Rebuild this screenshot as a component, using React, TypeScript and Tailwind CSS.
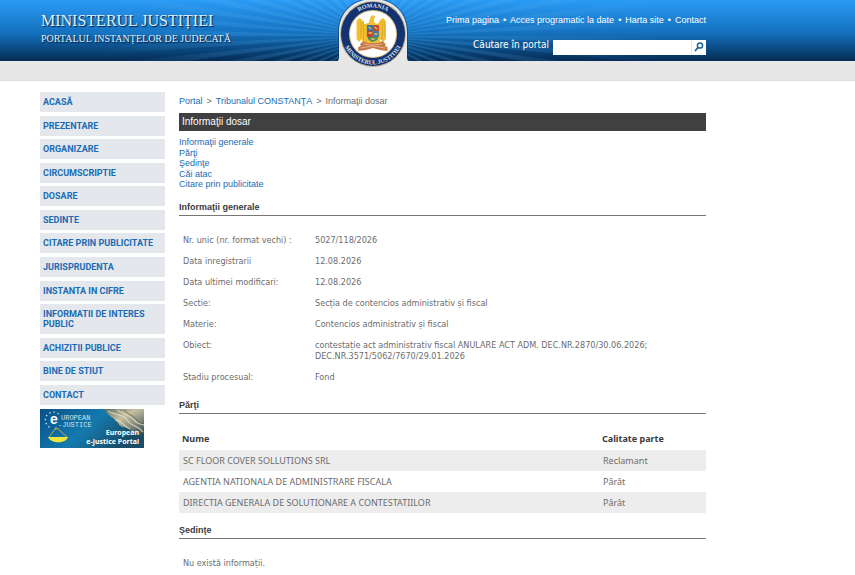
const menu = [
  "ACASĂ",
  "PREZENTARE",
  "ORGANIZARE",
  "CIRCUMSCRIPTIE",
  "DOSARE",
  "SEDINTE",
  "CITARE PRIN PUBLICITATE",
  "JURISPRUDENTA",
  "INSTANTA IN CIFRE",
  "INFORMATII DE INTERES PUBLIC",
  "ACHIZITII PUBLICE",
  "BINE DE STIUT",
  "CONTACT",
]

const topLinks = ["Prima pagina", "Acces programatic la date", "Harta site", "Contact"]

const sections = ["Informaţii generale", "Părţi", "Şedinţe", "Căi atac", "Citare prin publicitate"]

const details = [
  { label: "Nr. unic (nr. format vechi) :", value: "5027/118/2026" },
  { label: "Data inregistrarii", value: "12.08.2026" },
  { label: "Data ultimei modificari:", value: "12.08.2026" },
  { label: "Sectie:", value: "Secția de contencios administrativ și fiscal" },
  { label: "Materie:", value: "Contencios administrativ și fiscal" },
  { label: "Obiect:", value: "contestație act administrativ fiscal ANULARE ACT ADM. DEC.NR.2870/30.06.2026; DEC.NR.3571/5062/7670/29.01.2026" },
  { label: "Stadiu procesual:", value: "Fond" },
]

const parties = [
  { name: "SC FLOOR COVER SOLLUTIONS SRL", role: "Reclamant" },
  { name: "AGENTIA NATIONALA DE ADMINISTRARE FISCALA", role: "Pârât" },
  { name: "DIRECTIA GENERALA DE SOLUTIONARE A CONTESTATIILOR", role: "Pârât" },
]

// thin wedges that fan out from behind the emblem
const rays = Array.from({ length: 48 }, (_, i) => {
  const a = (i * 7.5 * Math.PI) / 180
  const b = ((i * 7.5 + 3.4) * Math.PI) / 180
  const point = (t: number) => `${(373 + 520 * Math.cos(t)).toFixed(1)},${(36 + 260 * Math.sin(t)).toFixed(1)}`
  return `373,36 ${point(a)} ${point(b)}`
})

const Rays = () => (
  <svg className="absolute inset-0 h-full w-full" viewBox="0 0 855 61" preserveAspectRatio="xMinYMin slice" aria-hidden="true">
    <defs>
      <radialGradient id="rayFade" gradientUnits="userSpaceOnUse" cx="373" cy="36" r="290">
        <stop offset="0" stopColor="#5fc0ff" stopOpacity="0.2" />
        <stop offset="0.5" stopColor="#5fc0ff" stopOpacity="0.14" />
        <stop offset="1" stopColor="#5fc0ff" stopOpacity="0" />
      </radialGradient>
    </defs>
    {rays.map((points) => <polygon key={points} points={points} fill="url(#rayFade)" />)}
  </svg>
)

const Emblem = () => (
  <svg className="relative block h-[70px] w-[80px]" viewBox="0 0 80 70" role="img" aria-label="România - Ministerul Justiției">
    <defs>
      <path id="arcTop" d="M13.500 33a26.500 26.500 0 0 1 53 0" />
      <path id="arcBottom" d="M9.500 33a30.500 30.500 0 0 0 61 0" />
    </defs>
    <path d="M3 61c2-1 2-3 2-6V32C5 12 20-2 40-2s35 14 35 34v23c0 3 0 5 2 6z" fill="#06305c" opacity="0.5" />
    <path d="M4 61.500c2-1 2-3 2-6V32C6 12 21-1 40-1s34 13 34 33v23.500c0 3 0 5 2 6z" fill="#e7e7e7" />
    <circle cx="40" cy="34" r="33" fill="#b9b391" />
    <circle cx="40" cy="34" r="32" fill="#14326f" />
    <circle cx="40" cy="34" r="24" fill="#d9c98c" />
    <circle cx="40" cy="34" r="23" fill="#fff" />
    <g transform="translate(0 1)" fill="#dfe6f2" fontSize="6" fontWeight="bold" fontFamily="Liberation Serif, serif" textAnchor="middle">
      <text>
        <textPath href="#arcTop" startOffset="50%">ROMANIA</textPath>
      </text>
      <text>
        <textPath href="#arcBottom" startOffset="50%">MINISTERUL JUSTITIEI</textPath>
      </text>
    </g>
    <g transform="translate(5.500 0) scale(0.860 1)">
      <path d="M38 16l2-1 3 2-2 2 1 4 4 1c1-3 3-5 6-6l3 3v18l-3 3-3-3-2 5h-18l-2-5-3 3-3-3V21l3-3c3 1 5 3 6 6l5-1 1-3z" fill="#f1be2c" />
      <path d="M29 21v19M26 22v16M51 21v19M54 22v15" stroke="#dda326" strokeWidth="0.800" />
      <path d="M33 25h7v6h-7z" fill="#3474b4" />
      <path d="M40 25h7v6h-7z" fill="#c34838" />
      <path d="M33 31h7v6h-7z" fill="#bd4535" />
      <path d="M40 31h7v6h-7z" fill="#497fa3" />
      <path d="M34 37h12c0 3-3 4-6 5-3-1-6-2-6-5z" fill="#488b61" />
      <path d="M35 27l3 2M42 27l3 2M35 33h4M42 34h3M38 39h4" stroke="#f0c64b" strokeWidth="1.300" />
      <path d="M29 41l-4 3 1 2-3 1v4l9-1 8-2 8 2 9 1v-4l-3-1 1-2-4-3-5 2H34z" fill="#c87a4c" />
      <path d="M29 44l10 1 12-1M26 48l14-2 14 2" stroke="#edc4a0" strokeWidth="0.800" fill="none" />
    </g>
  </svg>
)

const JusticeBanner = () => (
  <a href="#e-justice" className="mt-1 block w-[104px]" aria-label="European e-Justice Portal">
    <svg className="block h-[39px] w-full" viewBox="0 0 104 39">
      <defs>
        <linearGradient id="bannerBlue" x1="0" y1="0" x2="1" y2="0.4">
          <stop offset="0" stopColor="#075087" />
          <stop offset="0.55" stopColor="#147aae" />
          <stop offset="1" stopColor="#194c66" />
        </linearGradient>
        <linearGradient id="bannerStone" x1="0" y1="0" x2="0.8" y2="1">
          <stop offset="0" stopColor="#526c67" />
          <stop offset="0.4" stopColor="#c9c0a1" />
          <stop offset="1" stopColor="#304e58" />
        </linearGradient>
      </defs>
      <path d="M0 0h104v39H0z" fill="url(#bannerBlue)" />
      <path d="M64 0h40v29c-5-5-9-3-14-8-4-4-9-1-12-7-2-5-9-5-14-14z" fill="url(#bannerStone)" />
      <path d="M68 2c7 5 15 2 19 9s10 4 16 12M77 1c8 5 13 5 17 10 3 4 7 4 10 5M75 11c7 1 10 7 15 9" stroke="#e9dfbf" strokeWidth="1.300" fill="none" opacity="0.7" />
      <path d="M84 1c4 5 9 5 13 10 2 3 5 4 7 3" stroke="#63543c" fill="none" opacity="0.7" />
      <path d="M18.500 5A8 8 0 1 0 12 19" fill="none" stroke="#e2edf2" strokeWidth="1.300" strokeDasharray="1.300 2.900" />
      <text x="10" y="15" fill="#fff" fontSize="14" fontWeight="bold" fontFamily="Liberation Sans, sans-serif">e</text>
      <text x="21" y="11" fill="#cae3ec" fontSize="7" fontFamily="Liberation Mono, monospace">UROPEAN</text>
      <text x="18" y="18" fill="#cae3ec" fontSize="7" fontFamily="Liberation Mono, monospace">-JUSTICE</text>
      <path d="M16 19L9 28M17 19l10 9M16 18v3" stroke="#dfb447" strokeWidth="0.900" fill="none" />
      <path d="M8 28h20c-2 7-17 7-20 0z" fill="#f1e63e" />
      <text x="99" y="26" textAnchor="end" fill="#fff" fontSize="7" fontWeight="bold" fontFamily="Noto Sans, sans-serif">European</text>
      <text x="99" y="35" textAnchor="end" fill="#fff" fontSize="7" fontWeight="bold" fontFamily="Noto Sans, sans-serif">e-Justice Portal</text>
    </svg>
  </a>
)

const Header = () => (
  <header className="relative h-[61px] bg-linear-to-b from-[#2a9bf5] via-[#1470bd] via-55% to-[#052c55] text-white">
    <Rays />
    <div className="relative grid max-w-[706px] grid-cols-[1fr_80px_1fr] items-start pl-10">
      <div className="pl-px pt-3 font-['Liberation_Serif',serif] text-[#e2f0fb] text-shadow-[1px_1px_1px_rgb(0_30_60)]">
        <h1 className="text-[16px] leading-[18px] whitespace-nowrap">MINISTERUL JUSTIȚIEI</h1>
        <p className="text-[10px] leading-[18px] whitespace-nowrap">PORTALUL INSTANȚELOR DE JUDECATĂ</p>
      </div>
      <Emblem />
      <div className="flex flex-col items-end">
        <nav className="flex gap-1 pt-[14px] text-[9px] leading-3 whitespace-nowrap">
          {topLinks.map((link, index) => (
            <span key={link} className="flex gap-1">
              {index > 0 && <span>•</span>}
              <a href="#top">{link}</a>
            </span>
          ))}
        </nav>
        <form className="mt-[13px] flex items-center">
          <label htmlFor="search" className="mr-1 pb-1 font-['DejaVu_Sans_Condensed','DejaVu_Sans',sans-serif] text-[10px] leading-3 whitespace-nowrap">Căutare în portal</label>
          <input id="search" type="text" className="h-[15px] w-[138px] bg-white px-1 text-[9px] text-gray-700 outline-none" />
          <button type="button" aria-label="Caută" className="flex h-[15px] w-[15px] items-center justify-center border-l border-gray-200 bg-white">
            <svg className="h-[10px] w-[10px]" viewBox="0 0 10 10" fill="none" stroke="#1a659d">
              <circle cx="6" cy="3.500" r="2.600" strokeWidth="1.500" />
              <path d="M4 5.500L1 9" strokeWidth="1.800" />
            </svg>
          </button>
        </form>
      </div>
    </div>
  </header>
)

const SectionTitle = ({ title }: { title: string }) => (
  <h3 className="border-b border-[#777] pb-0.5 text-[9px] leading-3 font-bold text-[#3b3b3b]">{title}</h3>
)

const Details = () => (
  <table className="mt-[14px] w-full font-['DejaVu_Sans_Condensed','DejaVu_Sans',sans-serif]">
    <tbody>
      {details.map((row) => (
        <tr key={row.label} className="align-top">
          <th scope="row" className="w-[132px] py-[5px] pl-1 text-left font-normal whitespace-nowrap">{row.label}</th>
          <td className="py-[5px] pl-1 pr-12">{row.value}</td>
        </tr>
      ))}
    </tbody>
  </table>
)

const Parties = () => (
  <table className="mt-[14px] w-full font-['Noto_Sans',sans-serif]">
    <thead>
      <tr className="text-left text-[#3b3b3b]">
        <th className="pt-[5px] pb-1.5 pl-[3px]">Nume</th>
        <th className="w-[104px] pt-[5px] pb-1.5">Calitate parte</th>
      </tr>
    </thead>
    <tbody>
      {parties.map((party) => (
        <tr key={party.name} className="odd:bg-[#ededed]">
          <td className="py-[5px] pl-1">{party.name}</td>
          <td className="py-[5px] pl-px">{party.role}</td>
        </tr>
      ))}
    </tbody>
  </table>
)

export default function App() {
  return (
    <div className="min-h-screen overflow-x-hidden bg-white font-['Liberation_Sans',sans-serif] text-[9px] leading-[11px] text-[#6c6c6c]">
      <Header />
      <div className="h-5 border-b border-[#dedede] bg-[#e7e7e7]" />
      <div className="flex max-w-[706px] items-start gap-[14px] pt-[11px] pl-10">
        <aside className="w-[125px] shrink-0">
          <nav className="flex min-h-[313px] flex-col justify-between">
            {menu.map((item) => (
              <a key={item} href="#menu" className="bg-[#e4e7ec] py-[5px] pr-2 pl-[3px] font-[Roboto,sans-serif] leading-[10px] font-bold text-[#1a6cb4]">{item}</a>
            ))}
          </nav>
          <JusticeBanner />
        </aside>
        <main className="min-w-0 flex-1">
          <nav className="flex gap-1 pt-1 text-[9px]">
            <a href="#portal" className="text-[#1a6cb4]">Portal</a>
            <span>&gt;</span>
            <a href="#tribunal" className="text-[#1a6cb4]">Tribunalul CONSTANŢA</a>
            <span>&gt;</span>
            <span>Informaţii dosar</span>
          </nav>
          <h2 className="mt-1.5 bg-[#404040] px-[3px] text-[10px] leading-[18px] text-white">Informaţii dosar</h2>
          <ul className="mt-1.5 flex min-h-[52px] flex-col justify-between leading-[10px] text-[#1a6cb4]">
            {sections.map((section) => (
              <li key={section}><a href="#section">{section}</a></li>
            ))}
          </ul>
          <section className="mt-3">
            <SectionTitle title="Informaţii generale" />
            <Details />
          </section>
          <section className="mt-[11px]">
            <SectionTitle title="Părţi" />
            <Parties />
          </section>
          <section className="mt-[11px]">
            <SectionTitle title="Şedinţe" />
            <p className="pt-[19px] pl-1 font-['DejaVu_Sans_Condensed','DejaVu_Sans',sans-serif]">Nu există informații.</p>
          </section>
        </main>
      </div>
    </div>
  )
}
